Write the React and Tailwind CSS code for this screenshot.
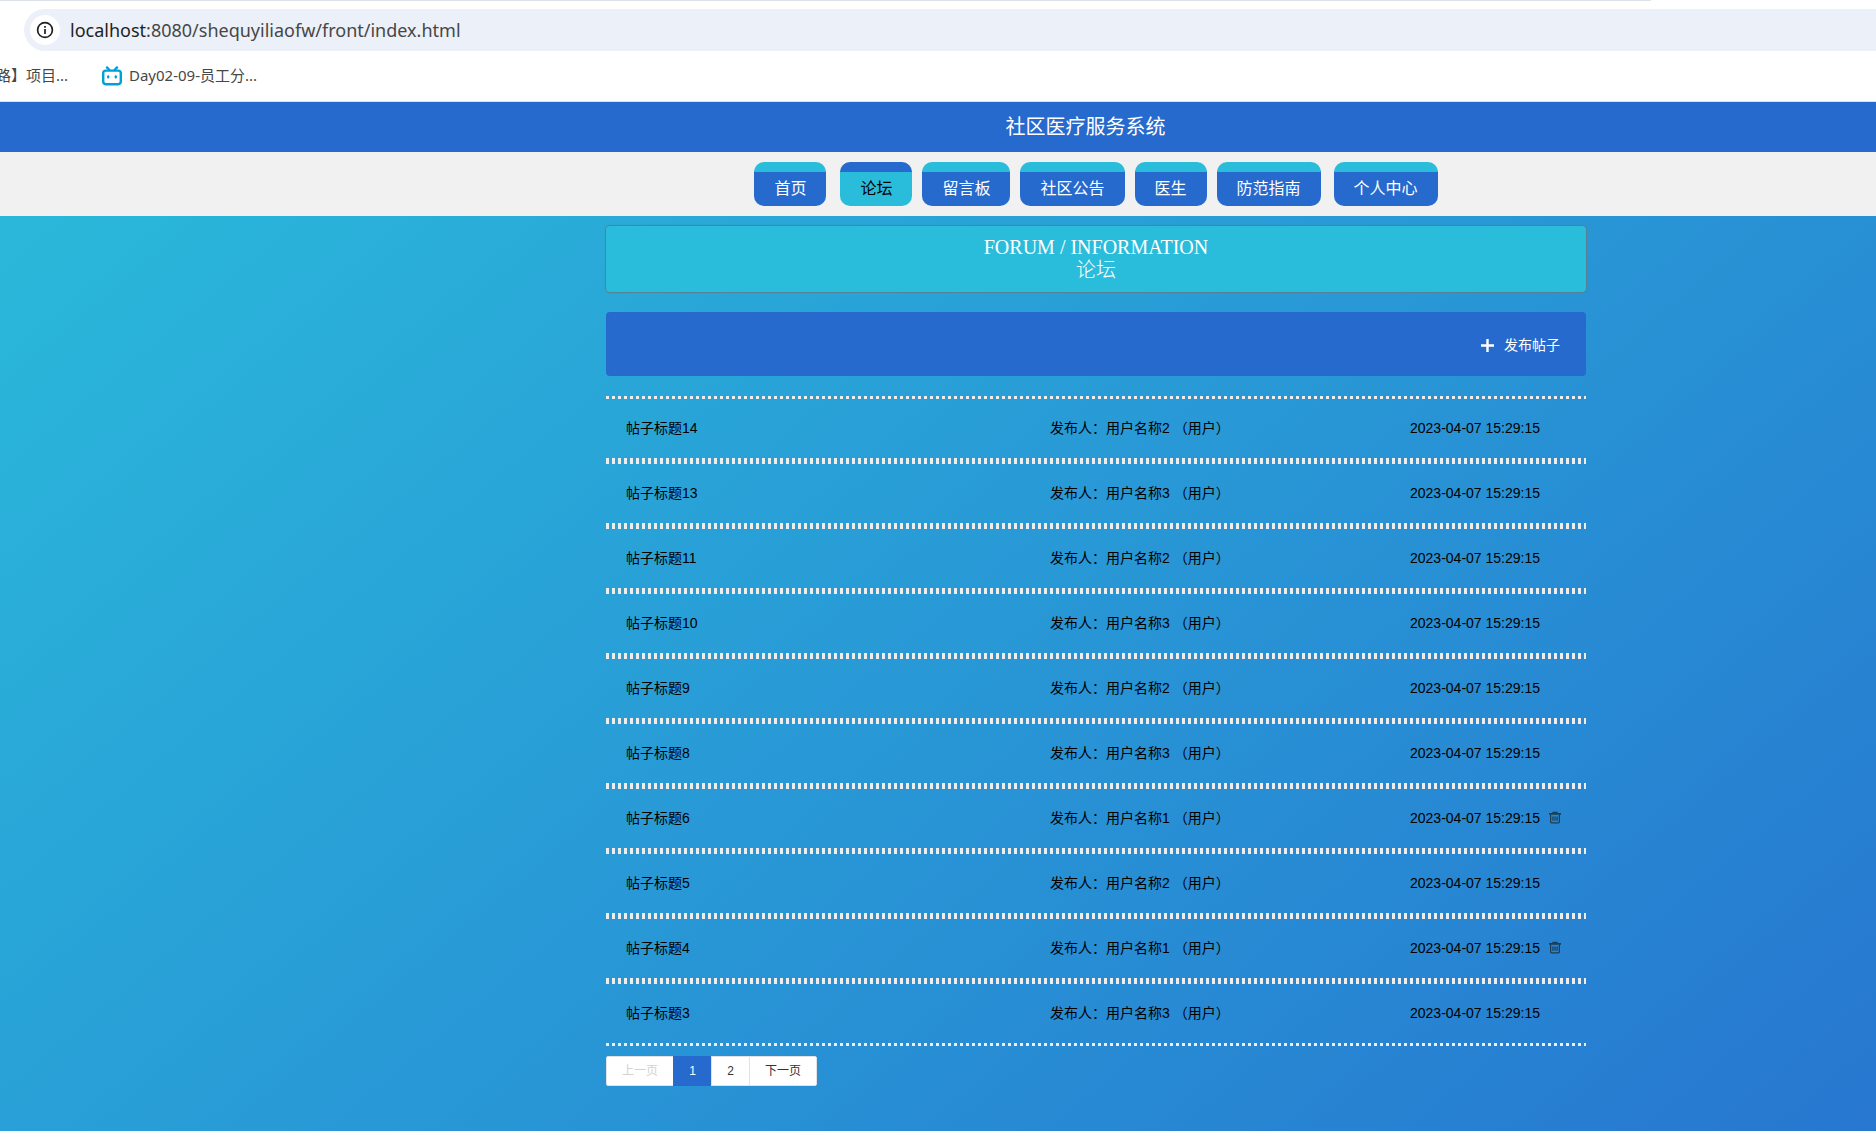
import React, { useState } from 'react';
import clsx from 'clsx';

const menus = [
    { name: '首页', space: '' },
    { name: '论坛', space: 'ml-[14px]' },
    { name: '留言板', space: 'ml-[10px]' },
    { name: '社区公告', space: 'ml-[10px]' },
    { name: '医生', space: 'ml-[10px]' },
    { name: '防范指南', space: 'ml-[10px]' },
    { name: '个人中心', space: 'ml-[13px]' },
];

const posts = [
    { id: 14, user: 2 },
    { id: 13, user: 3 },
    { id: 11, user: 2 },
    { id: 10, user: 3 },
    { id: 9, user: 2 },
    { id: 8, user: 3 },
    { id: 6, user: 1, mine: true },
    { id: 5, user: 2 },
    { id: 4, user: 1, mine: true },
    { id: 3, user: 3 },
];

const DottedLine = () => (
    <div className="h-[3px] bg-[repeating-linear-gradient(90deg,#eeeeee_0_3px,transparent_3px_6px)]"></div>
);

const InfoIcon = () => (
    <svg width="18" height="18" viewBox="0 0 18 18" fill="none" stroke="#1f1f1f" strokeWidth="1.7">
        <circle cx="9" cy="9" r="7.4" />
        <path d="M9 8v5M9 5v1.8" />
    </svg>
);

const BilibiliIcon = () => (
    <svg width="20" height="20" viewBox="0 0 20 20" fill="none" stroke="#00a1d6" strokeWidth="2.4" strokeLinecap="round">
        <rect x="1.2" y="4.6" width="17.6" height="13.6" rx="2.6" />
        <path d="M5 1.4l2.4 2.6M15 1.4L12.6 4" />
        <path d="M6.2 10.4v.8M13.8 10.4v.8" />
    </svg>
);

const TrashIcon = () => (
    <svg width="14" height="14" viewBox="0 0 14 14" fill="none" stroke="#1b3c50" strokeWidth="1.2">
        <path d="M4.4 1.4h5.2" />
        <path d="M1 2.9h12" strokeWidth="1.7" />
        <path d="M2.6 3.4v7.4q0 1 1 1h6.8q1 0 1-1V3.4" />
        <path d="M4.9 5.4v4.4M7 5.4v4.4M9.1 5.4v4.4" />
    </svg>
);

const BrowserBar = () => (
    <div className="bg-white border-b border-[#dcdfe3] overflow-hidden">
        <div className="h-px w-[88%] bg-[#dde1ea]"></div>
        <div className="mt-2 ml-6 pl-[6px] h-[42px] flex items-center bg-[#ebf0f9] rounded-l-full text-lg font-['Noto_Sans',sans-serif]">
            <button aria-label="站点信息" className="w-[30px] h-[30px] shrink-0 flex items-center justify-center bg-white rounded-full">
                <InfoIcon />
            </button>
            <label htmlFor="address" className="ml-[10px] text-[#1f1f1f]">localhost</label>
            <input id="address" defaultValue=":8080/shequyiliaofw/front/index.html" className="flex-1 min-w-0 outline-none bg-transparent text-[#474747]" />
        </div>
        <div className="h-[50px] flex items-center text-[15px] text-[#474747] font-['Noto_Sans','Noto_Sans_CJK_SC',sans-serif]">
            <a href="#" className="w-[68px] flex justify-end whitespace-nowrap">路】项目...</a>
            <a href="#" className="ml-[34px] flex items-center gap-[7px] whitespace-nowrap">
                <BilibiliIcon />
                Day02-09-员工分...
            </a>
        </div>
    </div>
);

const App = () => {
    const [active, setActive] = useState('论坛');
    const [page, setPage] = useState(1);

    return (
        <div className="min-h-screen flex flex-col text-sm text-black font-['Liberation_Sans','Noto_Sans_CJK_SC',sans-serif]">
            <BrowserBar />

            <header className="h-[50px] pl-[295px] flex items-center justify-center bg-[#266ace] text-white text-xl">
                社区医疗服务系统
            </header>

            <nav className="py-[10px] pl-[316px] flex justify-center bg-[#f1f1f1] text-base">
                {menus.map((menu) => (
                    <button
                        key={menu.name}
                        onClick={() => setActive(menu.name)}
                        className={clsx(
                            'h-[44px] px-5 rounded-[10px] border-t-[10px]',
                            menu.space,
                            active === menu.name
                                ? 'bg-[#2abddb] border-[#266ace] text-black'
                                : 'bg-[#266ace] border-[#2abddb] text-white'
                        )}
                    >
                        {menu.name}
                    </button>
                ))}
            </nav>

            <div className="flex-1 pl-[316px] pt-[10px] pb-10 bg-[linear-gradient(140deg,#2ab8da,#2898d6_50%,#2777d0)]">
                <main className="max-w-[980px] mx-auto">
                    <div className="py-[10px] bg-[#2abddb] rounded shadow-[0_0_1px_1px_#5a7f90] text-center text-white text-xl/[23px] font-['Liberation_Serif','Noto_Sans_CJK_SC',serif]">
                        <h1>FORUM / INFORMATION</h1>
                        <h2 className="font-light">论坛</h2>
                    </div>

                    <div className="mt-5 h-[64px] pr-[26px] pt-[2px] flex items-center justify-end bg-[#266ace] rounded">
                        <button className="flex items-center gap-[10px] text-white">
                            <svg width="13" height="13" viewBox="0 0 13 13" stroke="currentColor" strokeWidth="2.4">
                                <path d="M6.5 0v13M0 6.5h13" />
                            </svg>
                            发布帖子
                        </button>
                    </div>

                    <ul className="mt-5">
                        {posts.map((post) => (
                            <li key={post.id}>
                                <DottedLine />
                                <div className="h-[59px] px-5 pb-[2px] grid grid-cols-[424px_360px_1fr] items-center">
                                    <a href="#">帖子标题{post.id}</a>
                                    <span>发布人：用户名称{post.user} （用户）</span>
                                    <div className="flex items-center gap-2">
                                        <span>2023-04-07 15:29:15</span>
                                        {post.mine && (
                                            <button aria-label="删除">
                                                <TrashIcon />
                                            </button>
                                        )}
                                    </div>
                                </div>
                                <DottedLine />
                            </li>
                        ))}
                    </ul>

                    {/* Pagination */}
                    <div className="mt-[10px] flex text-xs text-[#333333]">
                        <button disabled className="h-[30px] px-[15px] bg-white border border-[#e2e2e2] rounded-l-xs text-[#d2d2d2]">上一页</button>
                        {[1, 2].map((n) => (
                            <button
                                key={n}
                                onClick={() => setPage(n)}
                                className={clsx(
                                    'h-[30px] w-[39px] -ml-px border',
                                    page === n ? 'bg-[#266ace] border-[#266ace] text-white' : 'bg-white border-[#e2e2e2]'
                                )}
                            >
                                {n}
                            </button>
                        ))}
                        <button className="h-[30px] px-[15px] -ml-px bg-white border border-[#e2e2e2] rounded-r-xs">下一页</button>
                    </div>
                </main>
            </div>
        </div>
    );
};

export default App;
